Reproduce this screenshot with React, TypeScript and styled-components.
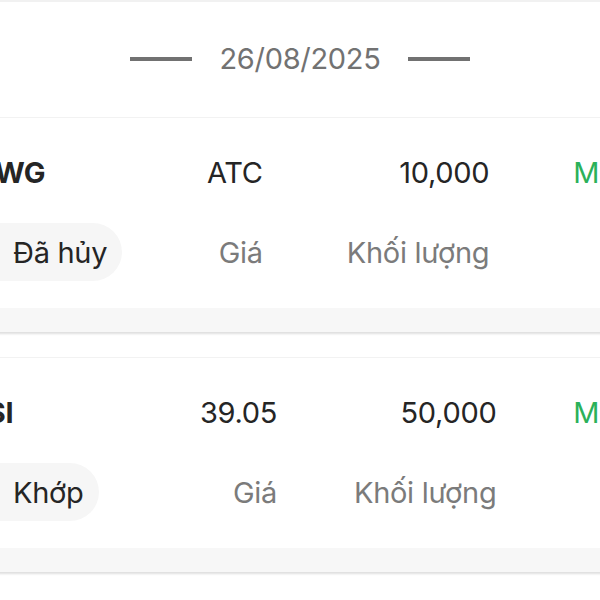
import styled, { createGlobalStyle } from 'styled-components';

const GlobalStyle = createGlobalStyle`
  body {
    margin: 0;
    background: #ffffff;
    overflow: hidden;
    font-family: Inter, "Noto Sans", sans-serif;
  }
`

const Screen = styled.div`
  width: 696px;
  margin-left: -48px;
  background: #ffffff;
`
const TopEdge = styled.div`
  height: 2px;
  background: #f1f1f1;
`
const DateHeader = styled.div`
  height: 115px;
  display: flex;
  align-items: center;
  justify-content: center;
  gap: 27px;
  padding-bottom: 2px;
  box-sizing: border-box;
`
const Dash = styled.div`
  width: 62px;
  height: 4px;
  background: #717171;
`
const DateText = styled.div`
  font-size: 29px;
  color: #727272;
  letter-spacing: -0.3px;
`

const Card = styled.div`
  border-top: 1px solid #f2f2f2;
  background: #ffffff;
  box-shadow: 0 2px 2px rgba(0, 0, 0, 0.13);
  margin-bottom: 25px;
`
const CardBody = styled.div`
  display: flex;
  justify-content: space-between;
  padding: 36px 16px 27px;
`
const Column = styled.div<{ $align: 'start' | 'end'; $minWidth?: number }>`
  display: flex;
  flex-direction: column;
  align-items: ${(p) => (p.$align === 'end' ? 'flex-end' : 'flex-start')};
  min-width: ${(p) => (p.$minWidth ? `${p.$minWidth}px` : 'auto')};
  gap: 33px;
`
const Cell = styled.div<{ $tone?: 'main' | 'label' | 'buy'; $bold?: boolean }>`
  height: 36px;
  display: flex;
  align-items: center;
  font-size: 29px;
  letter-spacing: -0.3px;
  white-space: nowrap;
  font-weight: ${(p) => (p.$bold ? 700 : 400)};
  color: ${(p) =>
    p.$tone === 'label' ? '#7b7b7b' : p.$tone === 'buy' ? '#2bb15a' : '#252525'};
`
const LabelCell = styled(Cell)`
  height: 58px;
`
const StatusPill = styled.div`
  height: 58px;
  display: flex;
  align-items: center;
  padding: 0 15px 0 45px;
  border-radius: 29px;
  background: #f6f6f6;
  font-size: 29px;
  letter-spacing: -0.3px;
  color: #252525;
  white-space: nowrap;
`
const CardFooter = styled.div`
  height: 24px;
  background: #f7f7f7;
`

type Order = {
  symbol: string;
  status: string;
  price: string;
  volume: string;
  side: string;
};

const orders: Order[] = [
  { symbol: 'MWG', status: 'Đã hủy', price: 'ATC', volume: '10,000', side: 'Mua' },
  { symbol: 'SSI', status: 'Khớp', price: '39.05', volume: '50,000', side: 'Mua' },
];

function OrderCard({ order }: { order: Order }) {
  return (
    <Card>
      <CardBody>
        <Column $align="start" $minWidth={155}>
          <Cell $bold>{order.symbol}</Cell>
          <StatusPill>{order.status}</StatusPill>
        </Column>
        <Column $align="end">
          <Cell>{order.price}</Cell>
          <LabelCell $tone="label">Giá</LabelCell>
        </Column>
        <Column $align="end">
          <Cell>{order.volume}</Cell>
          <LabelCell $tone="label">Khối lượng</LabelCell>
        </Column>
        <Column $align="start">
          <Cell $tone="buy">{order.side}</Cell>
        </Column>
      </CardBody>
      <CardFooter />
    </Card>
  );
}

export default function App() {
  return (
    <Screen>
      <GlobalStyle />
      <TopEdge />
      <DateHeader>
        <Dash />
        <DateText>26/08/2025</DateText>
        <Dash />
      </DateHeader>
      {orders.map((o) => (
        <OrderCard key={o.symbol} order={o} />
      ))}
    </Screen>
  );
}
